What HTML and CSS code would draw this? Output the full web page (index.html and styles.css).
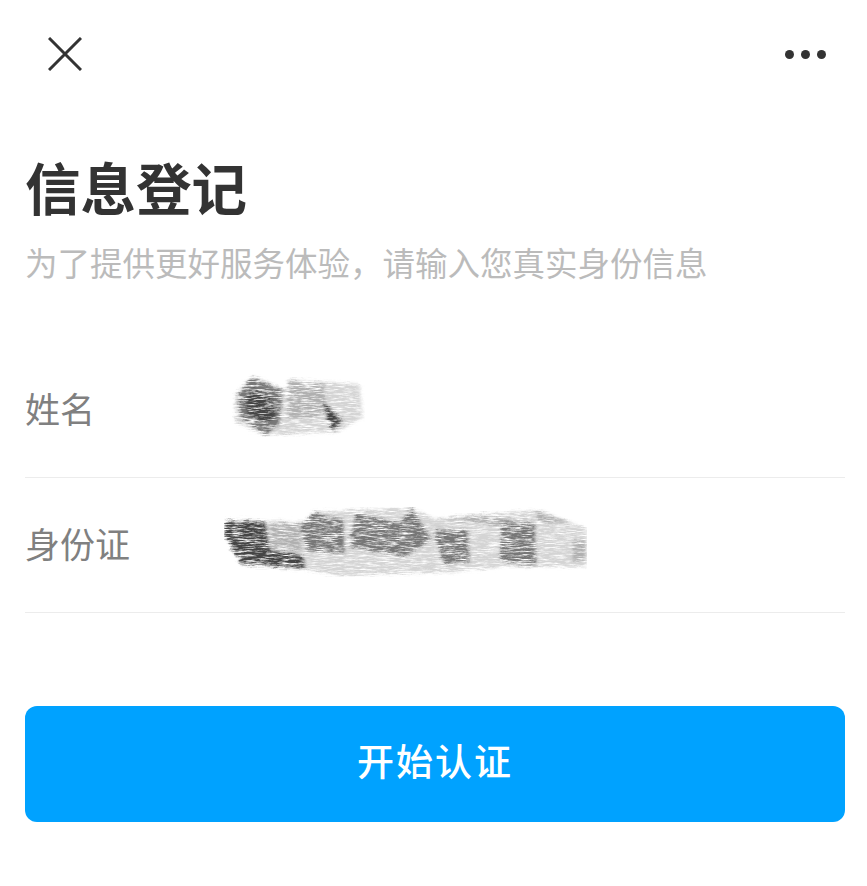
FILE: index.html
```html
<!DOCTYPE html>
<html lang="zh-CN">
<head>
    <meta charset="UTF-8">
    <meta name="viewport" content="width=device-width, initial-scale=1.0">
    <title>信息登记</title>
    <link rel="stylesheet" href="styles.css">
</head>
<body>
    <svg class="defs" width="0" height="0">
        <filter id="pencil" x="-5%" y="-5%" width="110%" height="110%">
            <feGaussianBlur in="SourceGraphic" stdDeviation="5" result="soft"/>
            <feTurbulence type="fractalNoise" baseFrequency="0.03 0.5" numOctaves="4" seed="11" result="noise"/>
            <feDisplacementMap in="soft" in2="noise" scale="20" xChannelSelector="R" yChannelSelector="G" result="rough"/>
            <feColorMatrix in="noise" type="matrix" values="0 0 0 0 0  0 0 0 0 0  0 0 0 0 0  2.6 0 0 0 -0.5" result="grain"/>
            <feComposite in="rough" in2="grain" operator="in"/>
            <feGaussianBlur stdDeviation="0.8"/>
        </filter>
    </svg>

    <div class="container">
        <header class="top-bar">
            <svg class="icon-close" viewBox="0 0 34 34">
                <path d="M1 1 L33 33 M33 1 L1 33"/>
            </svg>
            <div class="icon-more">
                <span class="dot"></span>
                <span class="dot"></span>
                <span class="dot"></span>
            </div>
        </header>

        <h1>信息登记</h1>
        <p class="subtitle">为了提供更好服务体验，请输入您真实身份信息</p>

        <div class="form">
            <div class="form-row">
                <div class="form-label">姓名</div>
                <svg class="scribble scribble-name" viewBox="60 40 400 190">
                    <g filter="url(#pencil)">
                        <path class="s-pale" d="M70 100 L120 45 L220 85 L230 58 L445 70 L455 170 L380 215 L240 220 L165 228 L70 185 Z"/>
                        <path class="s-light" d="M230 60 L340 70 L345 125 L320 170 L230 175 Z"/>
                        <path class="s-mid" d="M80 100 L120 48 L215 90 L205 190 L165 226 L85 170 Z"/>
                        <path class="s-dark" d="M105 115 L125 85 L185 115 L195 165 L160 190 L110 160 Z"/>
                        <path class="s-dark" d="M335 125 L398 180 L362 212 L345 175 Z"/>
                    </g>
                </svg>
            </div>
            <div class="form-row">
                <div class="form-label">身份证</div>
                <svg class="scribble scribble-id" viewBox="40 445 1090 210">
                    <g filter="url(#pencil)">
                        <path class="s-pale" d="M40 520 L50 485 L300 490 L310 460 L600 445 L670 480 L980 455 L1130 510 L1130 625 L870 625 L720 640 L390 652 L280 632 L90 615 Z"/>
                        <path class="s-dark" d="M40 520 L50 485 L165 488 L180 570 L280 590 L285 632 L170 620 L90 615 Z"/>
                        <path class="s-light" d="M180 495 L270 495 L275 575 L180 565 Z"/>
                        <path class="s-mid" d="M270 505 L310 460 L400 485 L405 585 L290 575 Z"/>
                        <path class="s-mid" d="M420 525 L440 462 L570 495 L605 447 L665 540 L585 595 L530 585 L420 565 Z"/>
                        <path class="s-mid" d="M670 512 L775 515 L780 610 L700 615 Z"/>
                        <path class="s-light" d="M700 480 L815 468 L980 490 L870 500 Z"/>
                        <path class="s-mid" d="M875 490 L975 495 L980 620 L870 605 Z"/>
                        <path class="s-light" d="M980 455 L1085 492 L985 490 Z"/>
                        <path class="s-light" d="M1090 545 L1128 545 L1128 605 L1090 605 Z"/>
                    </g>
                </svg>
            </div>
        </div>

        <button class="submit-btn"><span class="submit-text">开始认证</span></button>
    </div>
</body>
</html>
```

FILE: styles.css
```css
body {
    margin: 0;
    padding: 0;
    background: white;
    color: #333;
    font-family: "Noto Sans CJK SC", "Noto Sans", sans-serif;
}

.defs {
    position: absolute;
}

.container {
    padding: 37px 22px 0 25px;
    height: 849px;
}

.top-bar {
    display: flex;
    align-items: center;
    justify-content: space-between;
    padding: 0 19px 0 23px;
    height: 34px;
}

.icon-close {
    width: 34px;
    height: 34px;
}

.icon-close path {
    fill: none;
    stroke: #333;
    stroke-width: 3;
}

.icon-more {
    display: flex;
    gap: 7px;
    margin-top: 1px;
}

.dot {
    width: 9px;
    height: 9px;
    border-radius: 50%;
    background: #333;
}

h1 {
    margin: 75px 0 0;
    font-size: 55.5px;
    line-height: 80px;
    font-weight: 700;
    color: #333;
}

.subtitle {
    margin: 12px 0 0;
    font-size: 32.5px;
    line-height: 48px;
    color: #bbb;
    white-space: nowrap;
}

.form {
    margin-top: 57px;
}

.form-row {
    display: flex;
    align-items: center;
    height: 134px;
    border-bottom: 1px solid #ececec;
}

.form-label {
    width: 199px;
    margin-top: -6px;
    font-size: 35px;
    color: #808080;
}

.scribble {
    display: block;
}

.scribble-name {
    width: 133px;
    height: 63px;
    margin: -9px 0 0 8px;
}

.scribble-id {
    width: 363px;
    height: 70px;
    margin: -7px 0 0 0;
}

.s-pale {
    fill: #d4d4d4;
}

.s-light {
    fill: #b0b0b0;
}

.s-mid {
    fill: #777;
}

.s-dark {
    fill: #444;
}

.submit-btn {
    display: block;
    width: 100%;
    height: 116px;
    margin-top: 93px;
    border: none;
    border-radius: 12px;
    background: #00a2ff;
    color: white;
    font-family: inherit;
    font-size: 37px;
    font-weight: 500;
    letter-spacing: 2px;
}

.submit-text {
    display: block;
    margin-top: -8px;
}
```
